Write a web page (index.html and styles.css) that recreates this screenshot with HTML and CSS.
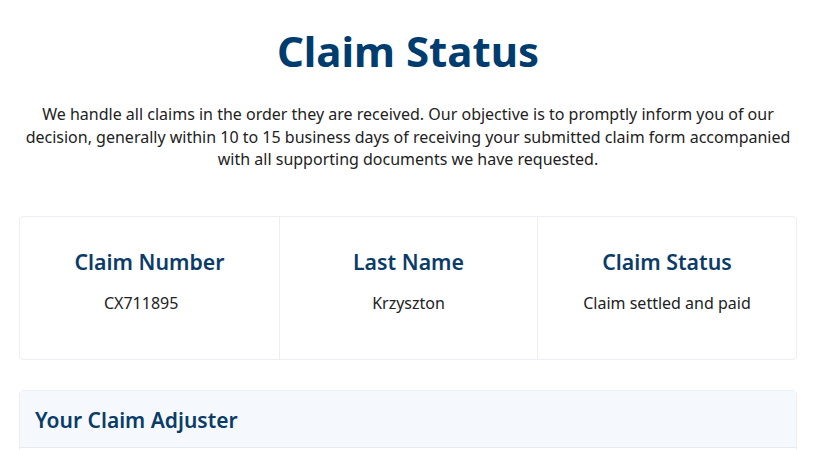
FILE: index.html
```html
<!DOCTYPE html>
<html lang="en">
<head>
    <meta charset="UTF-8">
    <title>Claim Status</title>
    <link rel="stylesheet" href="styles.css">
</head>
<body>
    <div class="container">
        <h1>Claim Status</h1>
        <p class="intro">We handle all claims in the order they are received. Our objective is to promptly inform you of our decision, generally within 10 to 15 business days of receiving your submitted claim form accompanied with all supporting documents we have requested.</p>

        <div class="claim-grid">
            <div class="claim-cell">
                <h3>Claim Number</h3>
                <p>CX711895&nbsp;&nbsp;&nbsp;&nbsp;</p>
            </div>
            <div class="claim-cell">
                <h3>Last Name</h3>
                <p>Krzyszton</p>
            </div>
            <div class="claim-cell">
                <h3>Claim Status</h3>
                <p>Claim settled and paid</p>
            </div>
        </div>

        <div class="adjuster">
            <div class="adjuster-header">
                <h3>Your Claim Adjuster</h3>
            </div>
            <div class="adjuster-body"></div>
        </div>
    </div>
</body>
</html>
```

FILE: styles.css
```css
body {
    font-family: 'Noto Sans', 'Open Sans', Arial, sans-serif;
    margin: 0;
    background: #fff;
    color: #222;
}

.container {
    width: 778px;
    margin-left: 19px;
}

h1 {
    margin: 0;
    padding-top: 23px;
    text-align: center;
    font-size: 42px;
    font-weight: 700;
    line-height: 56px;
    color: #003c6e;
}

.intro {
    margin: 24px 0 0 0;
    padding: 0 4px;
    text-align: center;
    font-size: 16px;
    line-height: 22.7px;
    color: #222;
}

.claim-grid {
    display: grid;
    grid-template-columns: 259px 258px 1fr;
    margin-top: 45px;
    border: 1px solid #ebeef2;
    border-radius: 4px;
}

.claim-cell {
    height: 142px;
    text-align: center;
    padding-top: 31px;
    box-sizing: border-box;
}

.claim-cell + .claim-cell {
    border-left: 1px solid #ebeef2;
}

.claim-cell h3 {
    margin: 0;
    font-size: 21.3px;
    font-weight: 600;
    line-height: 28px;
    color: #0b3c69;
}

.claim-cell p {
    margin: 16px 0 0 0;
    font-size: 16px;
    line-height: 22px;
    color: #222;
}

.adjuster {
    margin-top: 30px;
    border: 1px solid #ebeef2;
    border-radius: 4px;
}

.adjuster-header {
    background: #f5f9fd;
    padding: 15px 15px 13px;
    border-bottom: 1px solid #e6eaef;
}

.adjuster-header h3 {
    margin: 0;
    font-size: 21px;
    font-weight: 600;
    line-height: 28px;
    color: #0b3c69;
}

.adjuster-body {
    height: 120px;
}
```
